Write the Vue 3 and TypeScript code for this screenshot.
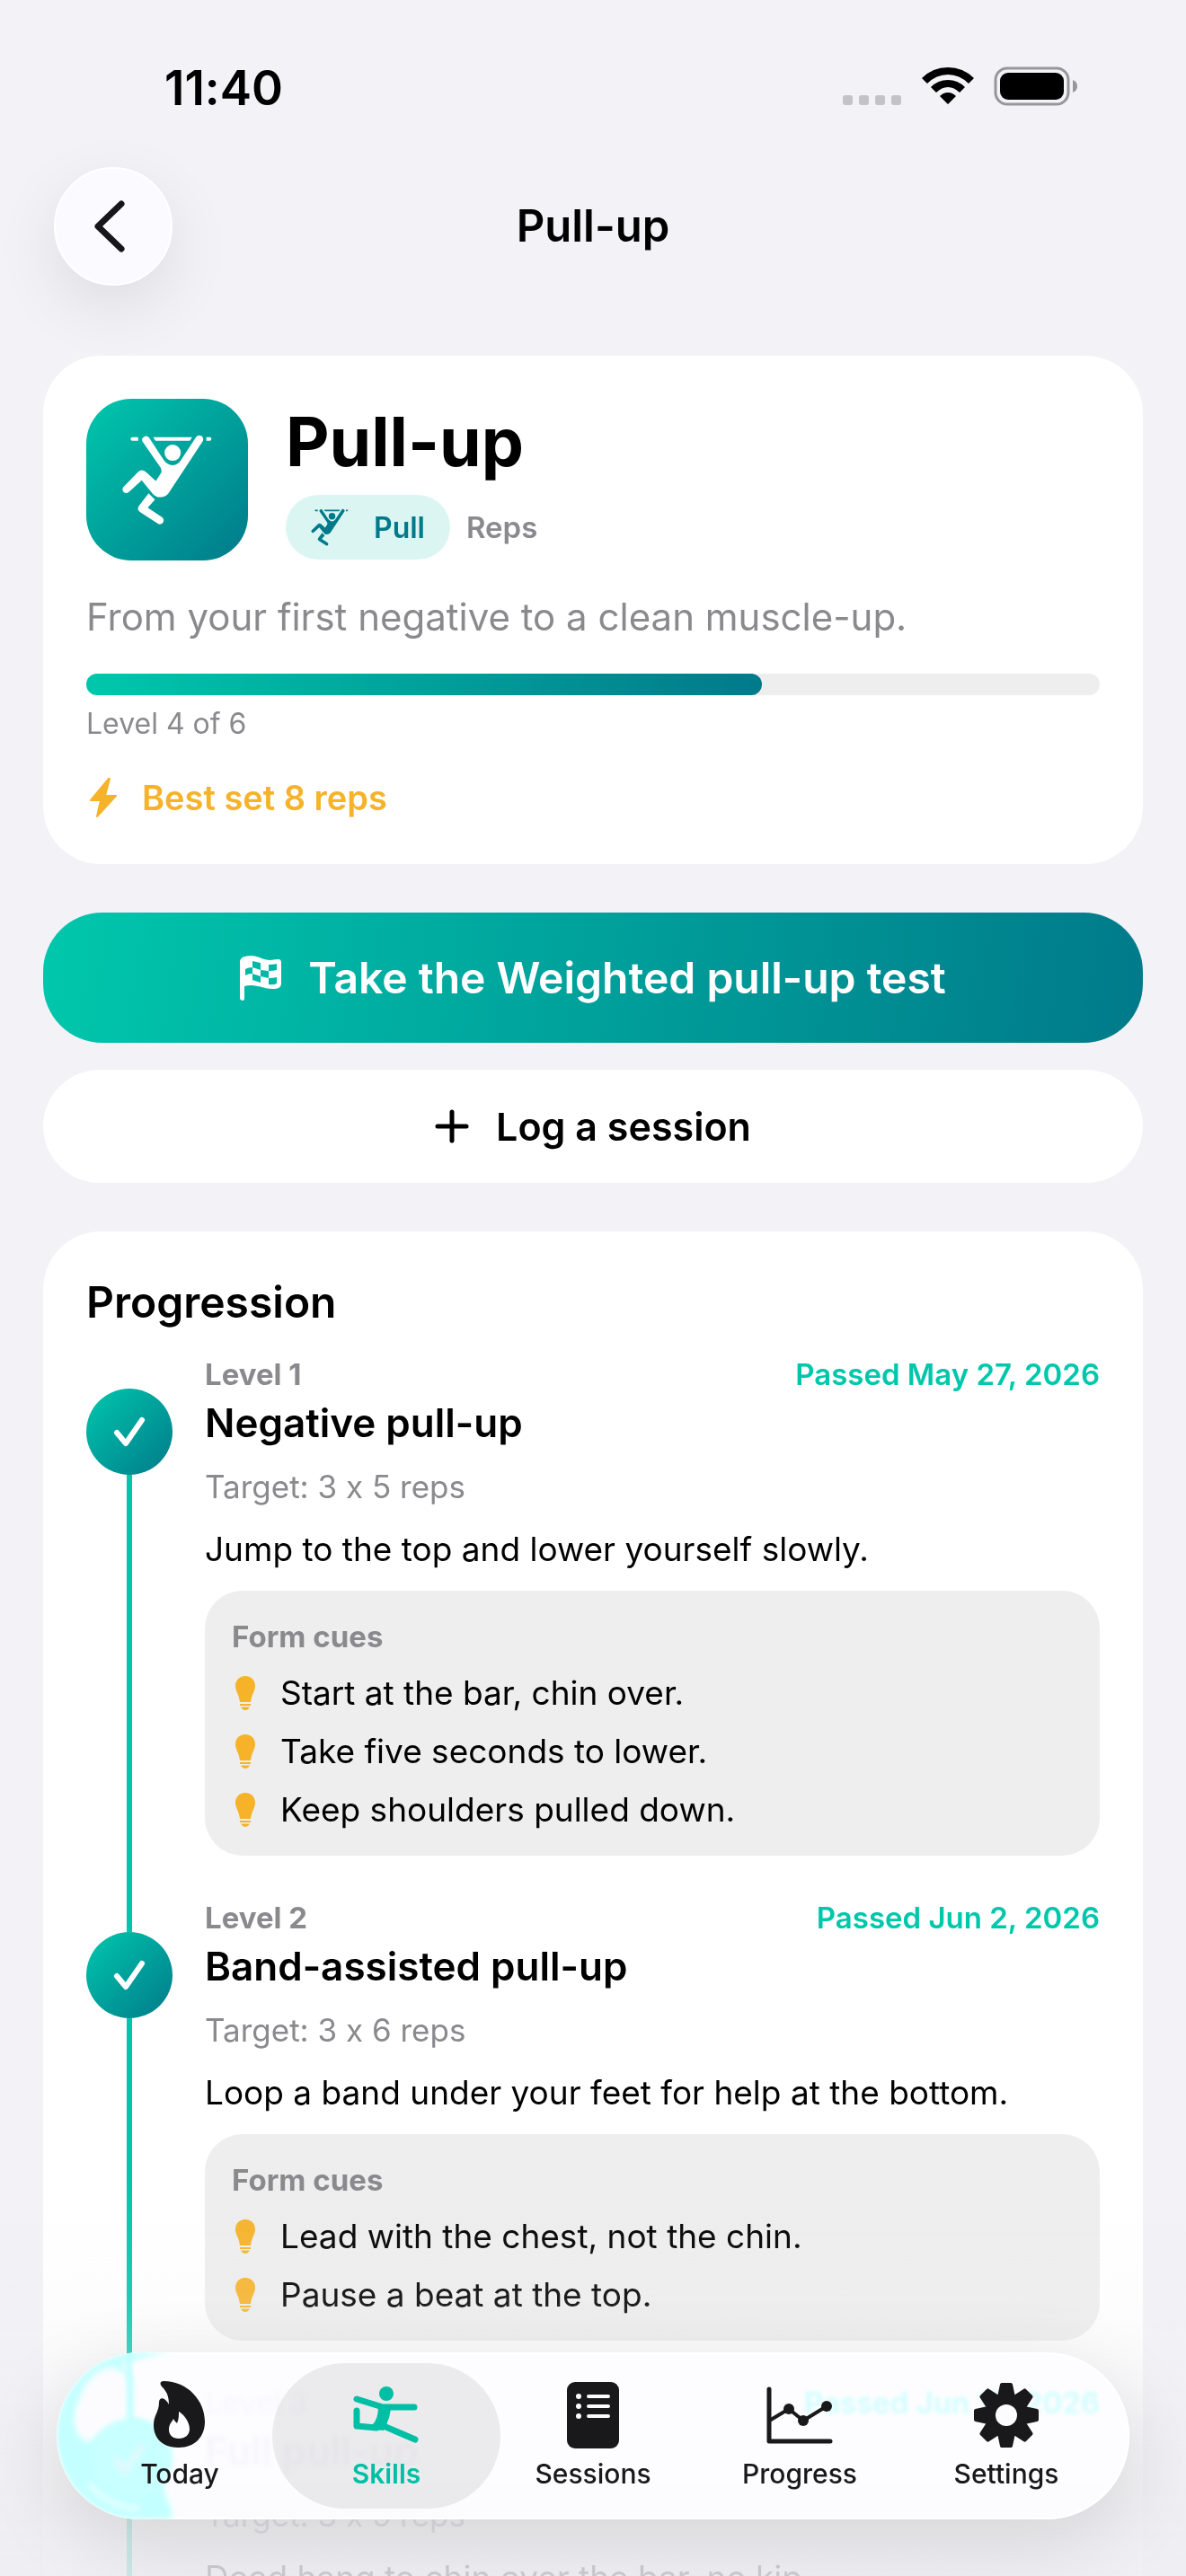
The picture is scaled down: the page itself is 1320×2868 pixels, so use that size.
<script setup lang="ts">
interface Level {
  id: number
  title: string
  target: string
  passed: string
  summary: string
  cues: string[]
}

interface Tab {
  id: string
  label: string
}

const currentLevel = 4
const totalLevels = 6
const progress = `${(currentLevel / totalLevels) * 100}%`

const levels: Level[] = [
  {
    id: 1,
    title: 'Negative pull-up',
    target: '3 x 5 reps',
    passed: 'May 27, 2026',
    summary: 'Jump to the top and lower yourself slowly.',
    cues: ['Start at the bar, chin over.', 'Take five seconds to lower.', 'Keep shoulders pulled down.'],
  },
  {
    id: 2,
    title: 'Band-assisted pull-up',
    target: '3 x 6 reps',
    passed: 'Jun 2, 2026',
    summary: 'Loop a band under your feet for help at the bottom.',
    cues: ['Lead with the chest, not the chin.', 'Pause a beat at the top.'],
  },
  {
    id: 3,
    title: 'Full pull-up',
    target: '3 x 5 reps',
    passed: 'Jun 13, 2026',
    summary: 'Dead hang to chin over the bar, no kip.',
    cues: [],
  },
]

const tabs: Tab[] = [
  { id: 'today', label: 'Today' },
  { id: 'skills', label: 'Skills' },
  { id: 'sessions', label: 'Sessions' },
  { id: 'progress', label: 'Progress' },
  { id: 'settings', label: 'Settings' },
]
const activeTab = 'skills'
</script>

<template>
  <div class="screen">
    <svg class="defs" width="0" height="0" aria-hidden="true">
      <defs>
        <symbol id="climber" viewBox="105 130 305 305">
          <path d="M161 141V153H142a6 6 0 0 1 0-12ZM211 141H341L333 153H219ZM388 141h11a6 6 0 0 1 0 12h-11Z" />
          <circle cx="276" cy="193" r="27" />
          <path d="M175 155A13 13 0 0 1 197 142L246 217Q258 234 276 235Q294 234 304 217L353 142A13 13 0 0 1 376 155L262 328Q250 342 234 341Q220 341 210 330L173 285L131 323A12 12 0 0 1 112 307L160 258Q172 246 186 256L220 287L238 259Q240 250 236 243Z" />
          <path d="M196 328L217 349L193 376L238 406A13 13 0 0 1 228 430L168 391Q156 383 163 371Z" />
        </symbol>
      </defs>
    </svg>

    <div class="status">
      <span class="time">11:40</span>
      <div class="indicators">
        <svg width="66" height="44" viewBox="0 0 66 44" fill="#c3c3c7" aria-hidden="true">
          <rect x="0" y="32" width="11" height="11" rx="3" />
          <rect x="18" y="32" width="11" height="11" rx="3" />
          <rect x="36" y="32" width="11" height="11" rx="3" />
          <rect x="54" y="32" width="11" height="11" rx="3" />
        </svg>
        <svg width="58" height="44" viewBox="0 0 58 44" aria-hidden="true">
          <path d="M0 13Q12 1 29 1T58 13L52 19Q42 9 29 9T6 19ZM10 23Q18 15 29 15T48 23L42 29Q36 23 29 23T16 29ZM20 33Q24 29 29 29T38 33L29 42Z" />
        </svg>
        <svg width="94" height="44" viewBox="0 0 94 44" aria-hidden="true">
          <rect x="2" y="2" width="81" height="40" rx="13" fill="none" stroke="#97979b" stroke-width="3" />
          <rect x="7" y="7" width="71" height="30" rx="9" />
          <path d="M88 15Q93 17 93 22T88 29Z" fill="#97979b" />
        </svg>
      </div>
    </div>

    <header class="nav">
      <button class="back" type="button" aria-label="Back">
        <svg width="36" height="60" viewBox="0 0 36 60" fill="none" stroke="#17171b" stroke-width="7" stroke-linecap="round" stroke-linejoin="round">
          <path d="M31 5L5 30L31 55" />
        </svg>
      </button>
      <p class="nav-title">Pull-up</p>
    </header>

    <main class="content">
      <section class="card hero">
        <div class="hero-top">
          <div class="tile">
            <svg width="102" height="102" fill="#fff" aria-hidden="true"><use href="#climber" /></svg>
          </div>
          <div class="hero-text">
            <h1>Pull-up</h1>
            <div class="tags">
              <span class="chip">
                <svg width="42" height="42" fill="#007a8a" aria-hidden="true"><use href="#climber" /></svg>
                Pull
              </span>
              <span class="unit">Reps</span>
            </div>
          </div>
        </div>
        <p class="lead">From your first negative to a clean muscle-up.</p>
        <div class="track" role="progressbar" :aria-valuenow="currentLevel" aria-valuemin="0" :aria-valuemax="totalLevels">
          <div class="fill" :style="{ width: progress }"></div>
        </div>
        <p class="level-count">Level {{ currentLevel }} of {{ totalLevels }}</p>
        <p class="best">
          <svg width="40" height="46" viewBox="-4 -1 40 46" fill="#f6b32a" stroke="#f6b32a" stroke-width="2" stroke-linejoin="round" aria-hidden="true">
            <path d="M21 1L1 25H12L8 43L29 20H17L22 1Z" />
          </svg>
          Best set 8 reps
        </p>
      </section>

      <div class="actions">
        <button class="btn primary" type="button">
          <svg width="46" height="50" viewBox="0 0 46 50" fill="#fff" fill-rule="evenodd" aria-hidden="true">
            <path d="M0 6Q1 0 12 0C20 0 26 5 34 5Q40 4 43 4Q46 4 46 8V31Q46 37 37 37C28 37 20 33 13 33Q8 33 5 34V48Q5 50 3 50T0 48ZM6 15Q9 13 14 13V20Q9 20 6 22ZM14 6L23 8V16L14 13ZM14 20L23 23V30L14 27ZM23 16L32 17V25L23 23ZM32 10Q37 10 41 9V16Q37 17 32 17ZM32 25Q37 25 41 24V31Q38 33 32 32Z" />
          </svg>
          Take the Weighted pull-up test
        </button>
        <button class="btn secondary" type="button">
          <svg width="38" height="38" viewBox="0 0 38 38" fill="none" stroke="#000" stroke-width="5" stroke-linecap="round" aria-hidden="true">
            <path d="M19 3V35M3 19H35" />
          </svg>
          Log a session
        </button>
      </div>

      <section class="card progression">
        <h2>Progression</h2>
        <ol class="levels">
          <li v-for="level in levels" :key="level.id" class="level">
            <div class="rail" aria-hidden="true">
              <span class="line lead-in"></span>
              <span class="dot">
                <svg width="38" height="36" viewBox="0 0 38 36" fill="none" stroke="#fff" stroke-width="6" stroke-linecap="round" stroke-linejoin="round">
                  <path d="M5 19L15 31L33 5" />
                </svg>
              </span>
              <span class="line"></span>
            </div>
            <div class="body">
              <div class="meta">
                <span class="number">Level {{ level.id }}</span>
                <span class="passed">Passed {{ level.passed }}</span>
              </div>
              <h3>{{ level.title }}</h3>
              <p class="target">Target: {{ level.target }}</p>
              <p class="summary">{{ level.summary }}</p>
              <div v-if="level.cues.length" class="cues">
                <h4>Form cues</h4>
                <ul>
                  <li v-for="cue in level.cues" :key="cue">
                    <svg width="24" height="38" viewBox="0 0 24 38" fill="#f6b32a" aria-hidden="true">
                      <path d="M12 0C19 0 23 5 23 11C23 17 19 20 18 29H6C5 20 1 17 1 11C1 5 5 0 12 0ZM6 31H18V33H6ZM7 34.500H17Q15 38 12 38T7 34.500Z" />
                    </svg>
                    {{ cue }}
                  </li>
                </ul>
              </div>
            </div>
          </li>
        </ol>
      </section>
    </main>

    <div class="fade" aria-hidden="true"></div>

    <nav class="tabbar" aria-label="Main">
      <svg class="glare" width="140" height="186" viewBox="0 0 140 186" aria-hidden="true">
        <defs>
          <filter id="soft"><feGaussianBlur stdDeviation="3" /></filter>
        </defs>
        <g filter="url(#soft)">
          <path d="M128 0H90C40 0 0 42 0 93S40 186 90 186H126Q132 178 124 166L100 80Q70 70 36 100Q20 94 20 74C22 40 50 12 128 0Z" fill="#c4ffff" />
          <path d="M52 26Q82 6 82 40V80" fill="none" stroke="#c4ffff" stroke-width="6" />
          <path d="M30 40C50 10 76 8 76 44V74Q52 76 36 98Q14 90 30 40Z" fill="#fcfcff" />
          <circle cx="84" cy="118" r="44" fill="#c8ffff" />
          <path d="M64 118L76 132L96 104" fill="none" stroke="#e6f8fc" stroke-width="6" />
          <path d="M36 146Q56 172 92 174" fill="none" stroke="#f0ffff" stroke-width="4" />
        </g>
      </svg>
      <a v-for="tab in tabs" :key="tab.id" href="#" class="tab" :class="{ active: tab.id === activeTab }" :aria-current="tab.id === activeTab ? 'page' : undefined">
        <span class="tab-icon" aria-hidden="true">
          <svg v-if="tab.id === 'today'" width="58" height="76" viewBox="0 0 58 76" fill="currentColor" fill-rule="evenodd">
            <path d="M11 0C38 0 57 22 57 45C57 62 46 74 28 74C10 74 0 64 0 49C0 38 6 34 6 24C6 17 13 18 17 26C17 16 14 11 9 6C6 2 8 0 11 0ZM28 34C31 35 40 44 40 53C40 60 35 64 28 64C21 64 17 60 17 54C17 48 20 46 22 42C23 44 25 46 26 47C28 43 28 38 28 34Z" />
          </svg>
          <svg v-else-if="tab.id === 'skills'" width="74" height="64" viewBox="0 0 74 64" fill="none" stroke="currentColor" stroke-linecap="round" stroke-linejoin="round">
            <circle cx="37" cy="8" r="8" fill="currentColor" stroke="none" />
            <path d="M4 14L33 23H68" stroke-width="7" />
            <path d="M4 27V44L26 46" stroke-width="7" />
            <path d="M34 44L69 59" stroke-width="7" />
            <path d="M28 22L42 25Q41 34 37 43L34 49L22 48V42Q28 36 28 22Z" fill="currentColor" stroke="none" />
          </svg>
          <svg v-else-if="tab.id === 'sessions'" width="58" height="74" viewBox="0 0 58 74">
            <rect width="58" height="74" rx="9" fill="currentColor" />
            <g stroke="#fcfcff" stroke-width="4" stroke-linecap="round">
              <path d="M24 16H46M24 27H46M24 38H46" />
            </g>
            <g fill="#fcfcff">
              <circle cx="13" cy="16" r="3" />
              <circle cx="13" cy="27" r="3" />
              <circle cx="13" cy="38" r="3" />
            </g>
          </svg>
          <svg v-else-if="tab.id === 'progress'" width="74" height="64" viewBox="0 0 74 64" fill="none" stroke="currentColor" stroke-linecap="round" stroke-linejoin="round">
            <path d="M3 3V61H71" stroke-width="5" />
            <path d="M5 37L25 25L41 38L67 22" stroke-width="4" />
            <g fill="currentColor" stroke="none">
              <circle cx="25" cy="25" r="6" />
              <circle cx="41" cy="38" r="6" />
              <circle cx="67" cy="22" r="6" />
            </g>
          </svg>
          <svg v-else width="72" height="72" viewBox="-36 -36 72 72" fill="currentColor">
            <g stroke="currentColor" stroke-width="4" stroke-linejoin="round">
              <path v-for="n in 8" :key="n" d="M-8 -20L-5 -34H5L8 -20Z" :transform="`rotate(${n * 45})`" />
            </g>
            <circle r="24" />
            <circle r="12" fill="#fcfcff" />
          </svg>
        </span>
        <span>{{ tab.label }}</span>
      </a>
    </nav>
  </div>
</template>

<style>
body {
  background: #f2f2f7;
}
</style>

<style scoped>
* {
  box-sizing: border-box;
  margin: 0;
  padding: 0;
}

.screen {
  position: relative;
  height: 100vh;
  overflow: hidden;
  background: #f2f2f7;
  color: #000;
  font-family: Inter, 'Liberation Sans', sans-serif;
  font-variant-ligatures: no-contextual;
}

.defs {
  position: absolute;
}

svg {
  display: block;
  flex: none;
}

button {
  border: 0;
  font: inherit;
}

.status {
  display: flex;
  justify-content: space-between;
  padding: 66px 120px 0 183px;
  height: 186px;
}

.time {
  font-size: 53px;
  line-height: 64px;
  font-weight: 600;
}

.indicators {
  display: flex;
  gap: 22px;
  padding-top: 8px;
}

.nav {
  display: grid;
  grid-template-columns: 132px 1fr 132px;
  align-items: center;
  padding: 0 60px;
  margin-bottom: 78px;
}

.back {
  display: flex;
  align-items: center;
  justify-content: center;
  height: 132px;
  padding-right: 9px;
  border: 2px solid #fff;
  border-radius: 50%;
  background: #fbfbff;
  box-shadow: 0 24px 72px rgba(0, 0, 0, 0.09);
}

.nav-title {
  font-size: 49px;
  line-height: 62px;
  font-weight: 600;
  text-align: center;
}

.content {
  display: flex;
  flex-direction: column;
  gap: 54px;
  padding: 0 48px;
}

.card {
  padding: 48px;
  border-radius: 64px;
  background: #fff;
}

.hero-top {
  display: flex;
  align-items: center;
  gap: 42px;
}

.tile {
  display: flex;
  align-items: center;
  justify-content: center;
  width: 180px;
  height: 180px;
  border-radius: 50px;
  background: linear-gradient(135deg, #00c7ac, #007a8a);
}

h1 {
  margin-bottom: 12px;
  font-size: 75px;
  line-height: 94px;
  font-weight: 700;
}

.tags {
  display: flex;
  align-items: center;
  gap: 18px;
}

.chip {
  display: flex;
  align-items: center;
  gap: 28px;
  height: 72px;
  padding: 0 28px;
  border-radius: 36px;
  background: #dbf6f2;
  color: #007a8a;
  font-size: 32px;
  font-weight: 600;
}

.unit {
  color: #8a8a8e;
  font-size: 33px;
  line-height: 42px;
  font-weight: 600;
}

.lead {
  margin: 30px 0;
  color: #8a8a8e;
  font-size: 42px;
  line-height: 66px;
}

.track {
  height: 24px;
  border-radius: 12px;
  background: #eee;
}

.fill {
  height: 100%;
  border-radius: 12px;
  background: linear-gradient(90deg, #00c7ac, #007a8a);
}

.level-count {
  margin: 12px 0 36px;
  color: #8a8a8e;
  font-size: 32px;
  line-height: 40px;
}

.best {
  display: flex;
  align-items: center;
  gap: 22px;
  color: #f6b32a;
  font-size: 38px;
  line-height: 52px;
  font-weight: 600;
}

.actions {
  display: flex;
  flex-direction: column;
  gap: 30px;
}

.btn {
  display: flex;
  align-items: center;
  justify-content: center;
  gap: 30px;
  font-weight: 600;
}

.primary {
  height: 145px;
  border-radius: 66px;
  background: linear-gradient(98deg, #00c7ac, #007a8a);
  color: #fff;
  font-size: 48px;
}

.secondary {
  height: 126px;
  border-radius: 63px;
  background: #fff;
  color: #000;
  font-size: 43px;
}

h2 {
  margin-bottom: 29px;
  font-size: 48px;
  line-height: 61px;
  font-weight: 600;
}

.levels,
.cues ul {
  list-style: none;
}

.level {
  display: flex;
  gap: 36px;
}

.rail {
  display: flex;
  flex-direction: column;
  align-items: center;
  width: 96px;
}

.line {
  flex: 1;
  width: 6px;
  background: #00c7ac;
}

.lead-in {
  flex: none;
  height: 37px;
}

.level:first-child .lead-in {
  background: none;
}

.dot {
  display: flex;
  align-items: center;
  justify-content: center;
  width: 96px;
  height: 96px;
  border-radius: 50%;
  background: linear-gradient(135deg, #00c7ac, #007a8a);
}

.body {
  flex: 1;
  padding-bottom: 48px;
}

.meta {
  display: flex;
  justify-content: space-between;
  color: #8a8a8e;
  font-size: 33px;
  line-height: 42px;
  font-weight: 600;
}

.number {
  font-weight: 700;
}

.passed {
  color: #00c7ac;
}

h3 {
  margin-top: 6px;
  font-size: 44px;
  line-height: 54px;
  font-weight: 600;
}

.target {
  margin-top: 18px;
  color: #8a8a8e;
  font-size: 35px;
  line-height: 52px;
}

.summary {
  margin: 18px 0 20px;
  font-size: 37px;
  line-height: 52px;
}

.cues {
  padding: 30px 30px 25px;
  border-radius: 42px;
  background: #eee;
}

h4 {
  margin-bottom: 15px;
  color: #8a8a8e;
  font-size: 33px;
  line-height: 42px;
  font-weight: 700;
}

.cues ul {
  display: flex;
  flex-direction: column;
  gap: 12px;
}

.cues li {
  display: flex;
  align-items: center;
  gap: 27px;
  padding-left: 3px;
  font-size: 37px;
  line-height: 53px;
}

.fade {
  position: fixed;
  right: 0;
  bottom: 0;
  left: 0;
  height: 440px;
  background: linear-gradient(rgba(240, 240, 244, 0), rgba(240, 240, 244, 0.12) 30%, rgba(240, 240, 244, 0.3) 44%, rgba(238, 238, 242, 0.84) 84%, rgba(238, 238, 242, 0.86));
}

.tabbar {
  position: fixed;
  right: 63px;
  bottom: 63px;
  left: 63px;
  display: grid;
  grid-template-columns: repeat(5, 1fr);
  height: 186px;
  padding: 12px 22px;
  border-radius: 93px;
  background: rgba(253, 253, 255, 0.78);
  backdrop-filter: blur(2px) contrast(0.15) brightness(1.74) saturate(9);
  box-shadow: 0 24px 90px rgba(0, 0, 0, 0.12), inset 0 0 0 2px rgba(255, 255, 255, 0.9);
}

.glare {
  position: absolute;
  top: 0;
  left: 0;
  border-radius: 93px 0 0 93px;
}

.tab {
  position: relative;
  display: flex;
  flex-direction: column;
  align-items: center;
  margin: 0 -12px;
  border-radius: 81px;
  color: #19191b;
  font-size: 30px;
  line-height: 40px;
  font-weight: 500;
  text-decoration: none;
}

.tab-icon {
  display: flex;
  align-items: center;
  justify-content: center;
  height: 76px;
  margin: 20px 0 7px;
}

.active {
  background: rgba(0, 0, 0, 0.07);
  color: #00bfa5;
  font-weight: 600;
}
</style>
